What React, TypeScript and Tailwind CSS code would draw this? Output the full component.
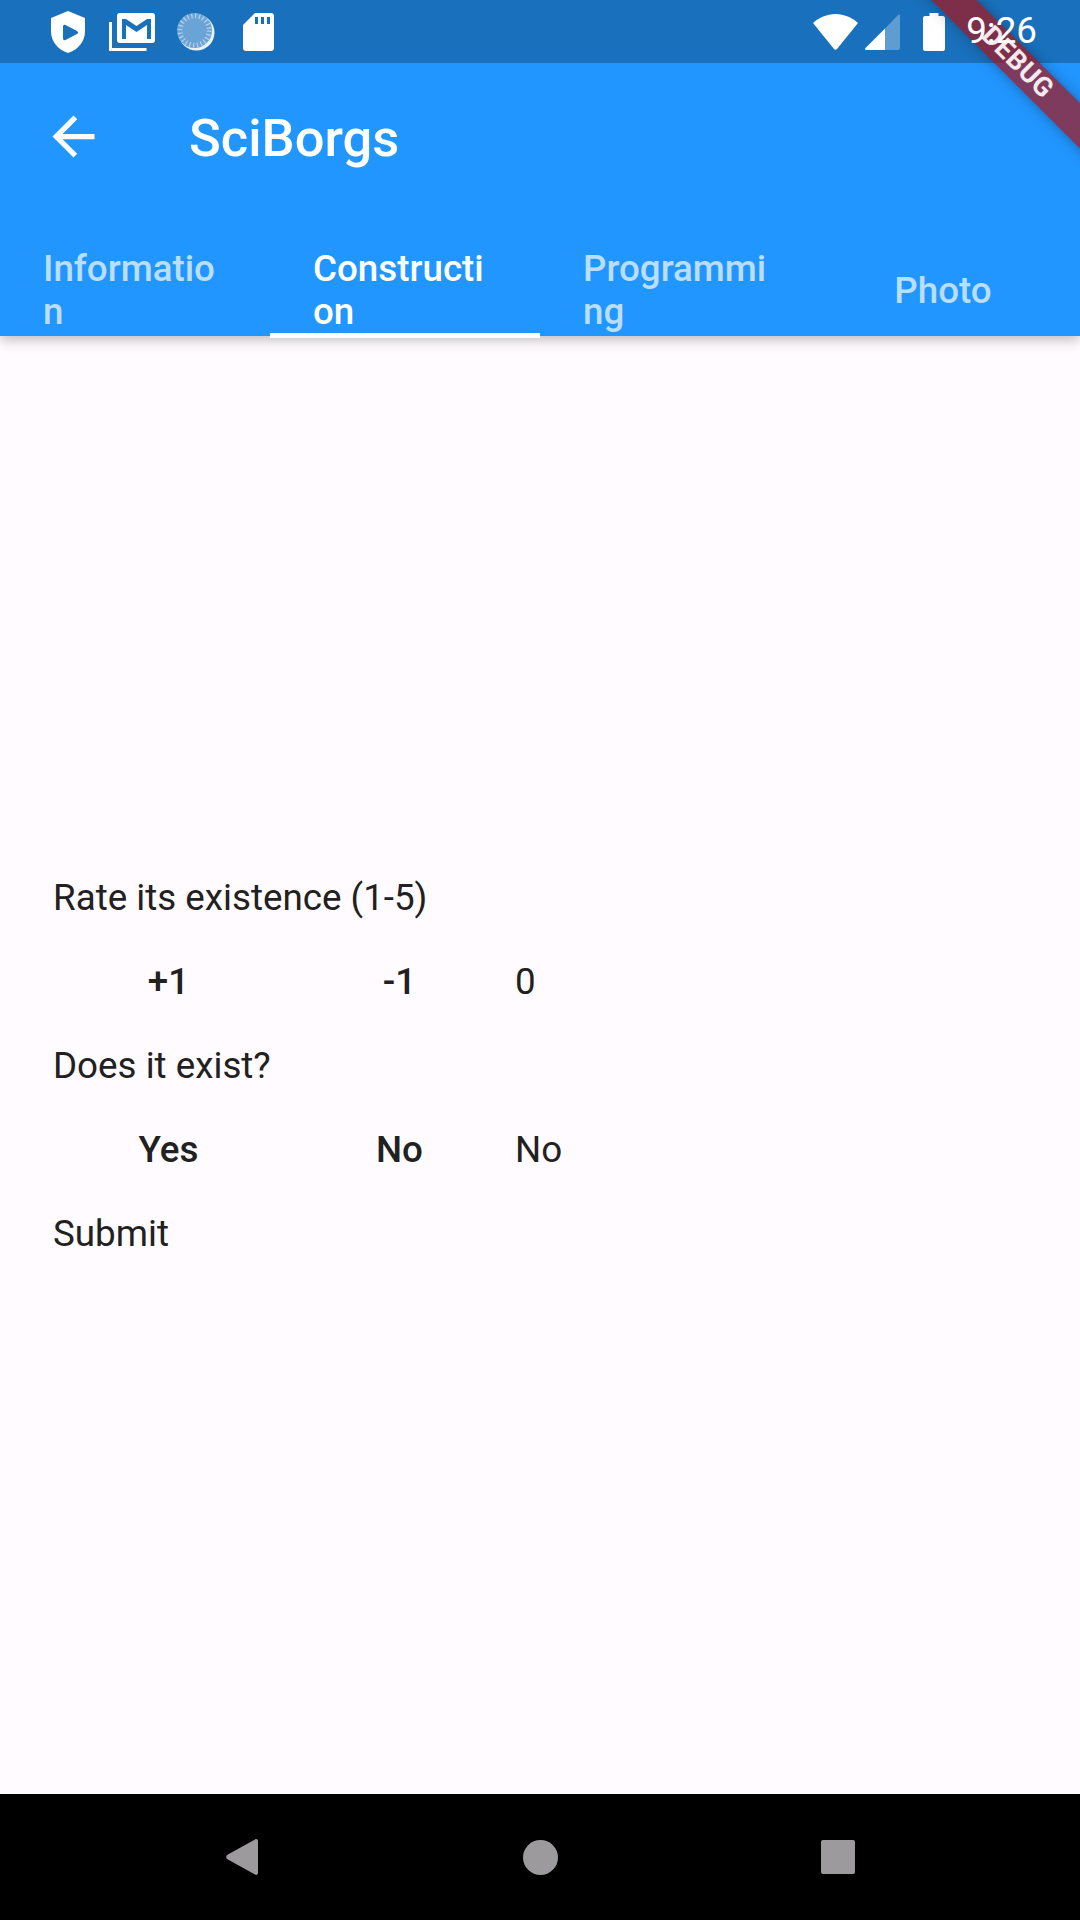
const tabs = [
  { label: "Information", active: false, pad: "pl-[43px] pr-[41px]" },
  { label: "Construction", active: true, pad: "pl-[43px] pr-[41px]" },
  { label: "Programming", active: false, pad: "pl-[43px] pr-[41px]" },
  { label: "Photo", active: false, pad: "pl-[40px] pr-[44px]" },
];

function StatusIcons() {
  return (
    <div className="flex items-center">
      <svg width="34" height="42" viewBox="0 0 34 42" className="ml-[51px]">
        <path d="M17 0L34 7V20C34 31 27 38.500 17 42C7 38.500 0 31 0 20V7Z" fill="#fff" />
        <path d="M12 15.500C12 14 13.500 13.500 14.500 14L26 20C27.500 21 27.500 22 26 23L14.500 29C13.500 29.500 12 29 12 27.500Z" fill="#1971b9" />
      </svg>
      <svg width="46" height="38" viewBox="0 0 46 38" className="ml-[24px]">
        <path d="M1.500 9V36.500H37.500" fill="none" stroke="#fff" strokeWidth="3" />
        <rect x="8" y="0" width="38" height="30" rx="3" fill="#fff" />
        <path d="M13 6H17L27.500 13L38 6H42V26H38V12L27.500 19L17 12V26H13Z" fill="#1971b9" />
      </svg>
      <svg width="38" height="38" viewBox="0 0 38 38" className="ml-[22px]">
        <circle cx="19.500" cy="19.500" r="18" fill="#fff" opacity="0.9" />
        <circle cx="17.500" cy="17.500" r="17.500" fill="#6aa3d5" />
        <circle cx="17.500" cy="17.500" r="14.500" fill="none" stroke="#b4d0ea" strokeWidth="5" strokeDasharray="1.300 2.500" />
        <circle cx="17.500" cy="17.500" r="12" fill="#6aa3d5" />
      </svg>
      <svg width="31" height="38" viewBox="0 0 31 38" className="ml-[28px]">
        <path d="M12 0H28C29.700 0 31 1.300 31 3V35C31 36.700 29.700 38 28 38H3C1.300 38 0 36.700 0 35V12Z" fill="#fff" />
        <path d="M12 4H15V11H12ZM18 4H21V11H18ZM24 4H27V11H24Z" fill="#1971b9" />
      </svg>
    </div>
  );
}

function SystemIcons() {
  return (
    <div className="flex items-center">
      <svg width="45" height="36" viewBox="0 0 45 36">
        <path d="M0 9C6 3.500 14 0 22.500 0C31 0 39 3.500 45 9L24 35C23 36 22 36 21 35Z" fill="#fff" />
      </svg>
      <svg width="35" height="36" viewBox="0 0 35 36" className="ml-[7px]">
        <path d="M20 14.500L33 1C34 0 35 .500 35 2V34C35 35 34 36 33 36H20Z" fill="#fff" opacity="0.3" />
        <path d="M20 14.500V36H1C0 36 -.300 35 .500 34Z" fill="#fff" />
      </svg>
      <svg width="22" height="38" viewBox="0 0 22 38" className="ml-[23px]">
        <path d="M6.500 0H15.500V3H20C21 3 22 4 22 5V36C22 37 21 38 20 38H2C1 38 0 37 0 36V5C0 4 1 3 2 3H6.500Z" fill="#fff" />
      </svg>
      <span className="relative z-30 ml-[21px] mr-[43px] text-[36.750px] leading-none text-white">9:26</span>
    </div>
  );
}

function Row({ a, b, c }: { a: string; b: string; c: string }) {
  return (
    <div className="flex h-[84px] items-center">
      <span className="w-[231px] text-center font-medium">{a}</span>
      <span className="w-[231px] text-center font-medium">{b}</span>
      <span>{c}</span>
    </div>
  );
}

export default function App() {
  return (
    <div className="relative flex h-[1920px] w-[1080px] flex-col overflow-hidden bg-[#fffbfe] font-['Roboto',sans-serif] text-[36.750px] text-[#212121]">
      <header className="relative bg-[#2196ff] shadow-[0_4px_12px_rgba(0,0,0,0.25)]">
        <div className="flex h-[63px] items-center justify-between bg-[#1971bd]">
          <StatusIcons />
          <SystemIcons />
        </div>
        <div className="flex h-[147px] items-center pl-[42px]">
          <svg width="63" height="63" viewBox="0 0 24 24" fill="#fff">
            <path d="M20 11H7.830l5.590-5.590L12 4l-8 8 8 8 1.410-1.410L7.830 13H20v-2z" />
          </svg>
          <h1 className="ml-[84px] pt-[3px] text-[52.500px] font-medium text-white">SciBorgs</h1>
        </div>
        <div className="grid h-[126px] grid-cols-4">
          {tabs.map((tab) => (
            <div
              key={tab.label}
              className={`flex items-center justify-center border-b-[5px] pt-[37px] font-medium leading-[43px] ${tab.pad} ${
                tab.active ? "border-white text-white" : "border-transparent text-white/70"
              }`}
            >
              <span className="break-all">{tab.label}</span>
            </div>
          ))}
        </div>
      </header>

      <main className="flex flex-1 flex-col justify-center pl-[53px] pt-[2px]">
        <div className="flex h-[84px] items-center">Rate its existence (1-5)</div>
        <Row a="+1" b="-1" c="0" />
        <div className="flex h-[84px] items-center">Does it exist?</div>
        <Row a="Yes" b="No" c="No" />
        <div className="flex h-[84px] items-center">Submit</div>
      </main>

      <nav className="flex h-[126px] items-center justify-center bg-black">
        <div className="flex w-[298px] justify-center">
          <svg width="32" height="36" viewBox="0 0 32 36" fill="#9c9a9c">
            <path d="M29 .500C30.500 -.500 32 .500 32 2V34C32 35.500 30.500 36.500 29 35.500L1 20C0 19 0 17 1 16Z" />
          </svg>
        </div>
        <div className="flex w-[298px] justify-center">
          <div className="h-[35px] w-[35px] rounded-full bg-[#9c9a9c]" />
        </div>
        <div className="flex w-[298px] justify-center">
          <div className="h-[34px] w-[34px] rounded-[2px] bg-[#9c9a9c]" />
        </div>
      </nav>

      {/* debug ribbon sits over the app bar corner, time shows through, label on top */}
      <div className="absolute left-[867px] top-[47px] z-20 h-[32px] w-[300px] rotate-45 bg-[#a8141a]/70 shadow-[0_0_14px_rgba(0,0,0,0.3)]" />
      <div className="absolute left-[868px] top-[46px] z-40 flex h-[32px] w-[300px] rotate-45 items-center justify-center text-[27px] font-bold leading-none tracking-[0.5px] text-white/90">
        DEBUG
      </div>
    </div>
  );
}
